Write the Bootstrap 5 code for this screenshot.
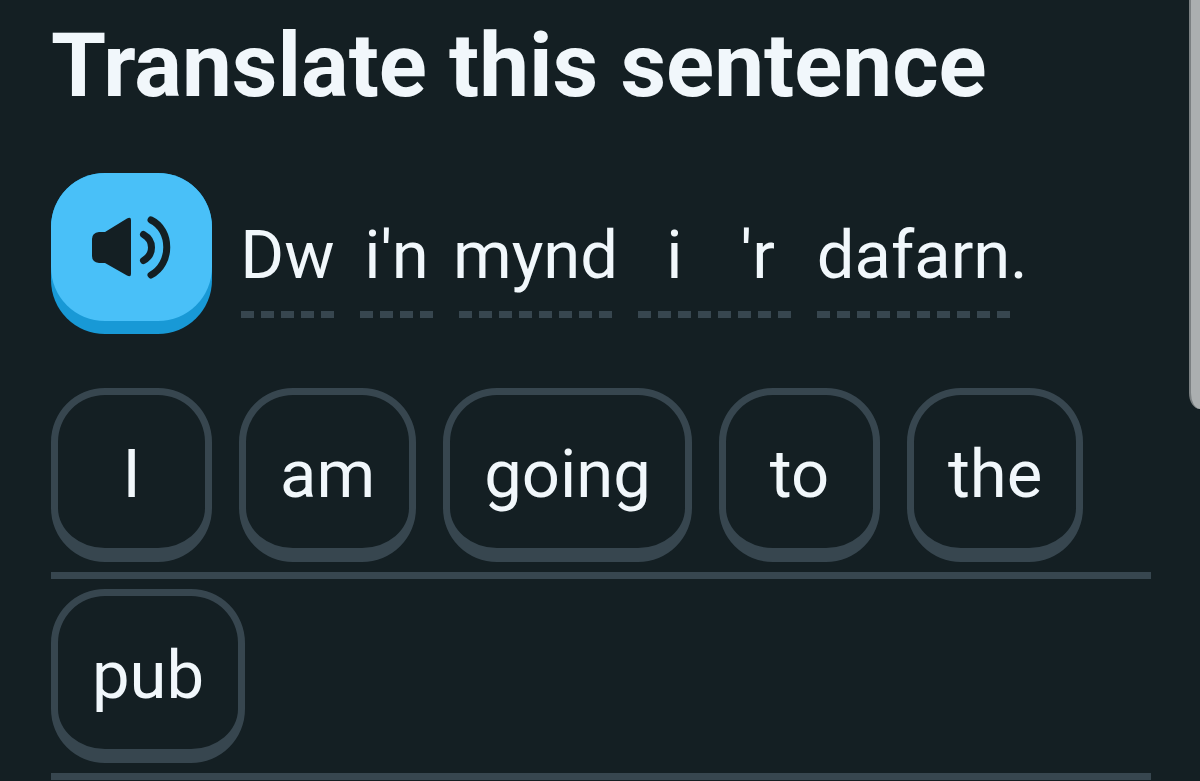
<!DOCTYPE html>
<html lang="en" data-bs-theme="dark">
<head>
<meta charset="utf-8">
<meta name="viewport" content="width=device-width, initial-scale=1">
<title>Translate this sentence</title>
<link href="https://cdn.jsdelivr.net/npm/bootstrap@5.3.0/dist/css/bootstrap.min.css" rel="stylesheet">
<style>
  :root { --ink: #f1f7fb; --page: #141f23; --line: #37464f; }
  body { background: var(--page); color: var(--ink); font-family: Roboto, "Liberation Sans", sans-serif; font-size: 67px; line-height: 80px; overflow-x: hidden; }
  .lesson { padding: 14px 49px 0 51px; }
  .prompt-title { color: var(--ink); font-size: 89px; line-height: 104px; font-weight: 700; margin-bottom: 55px; }
  .sentence { gap: 29px; margin-bottom: 54px; }
  .audio-btn { width: 161px; height: 161px; border: 0; border-radius: 54px; background: #1899d6; padding: 0 0 13px; color: var(--page); }
  .audio-face { height: 148px; border-radius: 54px; background: #49c0f8; }
  .tokens { column-gap: 26px; padding-bottom: 16px; }
  .hint { width: calc(var(--dashes) * 20px - 7px); padding-bottom: 23px; white-space: nowrap;
    background: repeating-linear-gradient(90deg, var(--line) 0 13px, transparent 13px 20px) left bottom / 100% 7px no-repeat; }
  .hint-pair { gap: 58px; padding-left: 12px; }
  .tile { min-width: 161px; height: 174px; padding: 4px 34px 0; color: var(--ink); background: transparent; border: 6px solid var(--line); border-width: 7px 7px 14px; border-radius: 54px; line-height: 80px; }
  .answer-row { gap: 27px; padding-bottom: 10px; margin-bottom: 10px; border-bottom: 7px solid var(--line); }
  .answer-row:last-child { margin-bottom: 0; }
  .scroll-thumb { position: fixed; top: 0; right: 0; width: 11px; height: 409px; background: #abafb0; border-left: 2px solid #7b8082; border-bottom-left-radius: 11px 16px; }
</style>
</head>
<body>
<main class="lesson">
  <h1 class="prompt-title">Translate this sentence</h1>
  <div class="sentence d-flex align-items-end">
    <button type="button" class="audio-btn flex-shrink-0" aria-label="Play sentence">
      <span class="audio-face d-flex align-items-center justify-content-center">
        <svg width="82" height="64" viewBox="0 0 82 64" fill="none" aria-hidden="true">
          <path d="M8 17h6L36 3.500Q40 1.500 40 5V59Q40 62.500 36 60.500L14 48H8Q1 47 1 41V24Q1 18 8 17Z" fill="currentColor"/>
          <path d="M52.500 19.500Q60.500 24 60.500 32.500T52.500 45.500" stroke="currentColor" stroke-width="7" stroke-linecap="round"/>
          <path d="M60 5C81 15 81 49 60 60" stroke="currentColor" stroke-width="7" stroke-linecap="round"/>
        </svg>
      </span>
    </button>
    <div class="tokens d-flex flex-wrap" lang="cy">
      <span class="hint d-flex justify-content-center" style="--dashes:5">Dw</span>
      <span class="hint d-flex justify-content-center" style="--dashes:4">i'n</span>
      <span class="hint d-flex justify-content-center" style="--dashes:8">mynd</span>
      <span class="hint hint-pair d-flex justify-content-center" style="--dashes:8"><span>i</span><span>'r</span></span>
      <span class="d-flex"><span class="hint d-flex justify-content-center" style="--dashes:10">dafarn</span><span>.</span></span>
    </div>
  </div>
  <section aria-label="Your answer">
    <div class="answer-row d-flex">
      <button type="button" class="tile">I</button>
      <button type="button" class="tile">am</button>
      <button type="button" class="tile">going</button>
      <button type="button" class="tile">to</button>
      <button type="button" class="tile">the</button>
    </div>
    <div class="answer-row d-flex">
      <button type="button" class="tile">pub</button>
    </div>
  </section>
</main>
<div class="scroll-thumb" aria-hidden="true"></div>
<script src="https://cdn.jsdelivr.net/npm/bootstrap@5.3.0/dist/js/bootstrap.bundle.min.js"></script>
</body>
</html>
